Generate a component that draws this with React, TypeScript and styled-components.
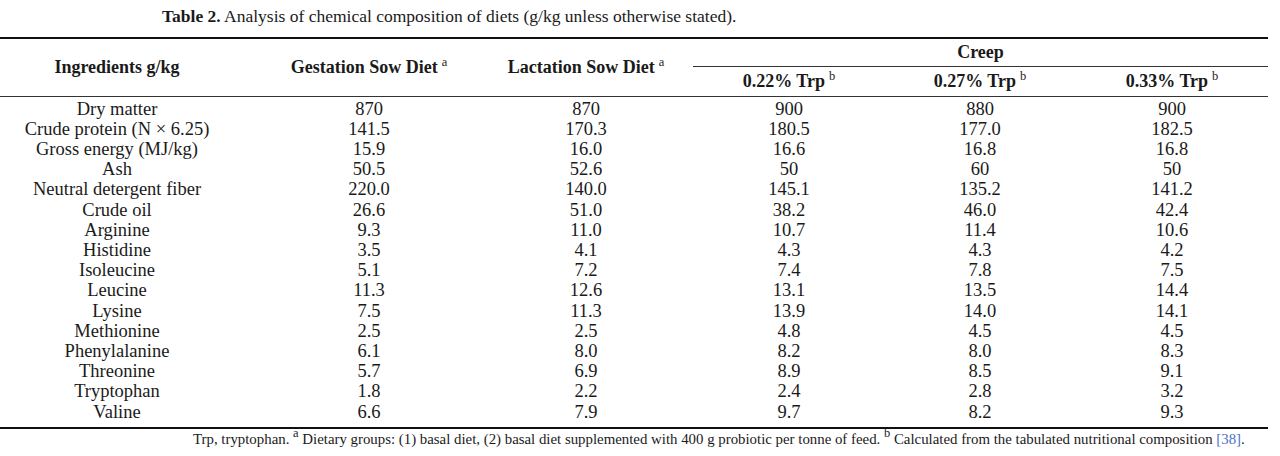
import React from "react";
import styled, { createGlobalStyle } from "styled-components";

const GlobalStyle = createGlobalStyle`
  html, body {
    margin: 0;
    padding: 0;
    background: #ffffff;
  }
  body {
    font-family: "Liberation Serif", "Times New Roman", serif;
    color: #1a1a1a;
  }
`;

const Page = styled.div`
  width: 1268px;
`;

const Caption = styled.div`
  height: 37px;
  padding-left: 162px;
  font-size: 17.5px;
  line-height: 33px;
  white-space: nowrap;

  b {
    font-weight: 700;
  }
`;

const Table = styled.table`
  width: 1268px;
  border-collapse: collapse;
  table-layout: fixed;
  border-top: 2px solid #111;
  border-bottom: 2px solid #111;
`;

const Head = styled.thead`
  border-bottom: 1px solid #333;
`;

const HeadCell = styled.th<{ $pad?: number }>`
  padding: 0 0 0 ${(p) => p.$pad ?? 0}px;
  font-size: 18px;
  font-weight: 700;
  text-align: center;
  vertical-align: middle;
  white-space: nowrap;
`;

const SubHeadRow = styled.tr`
  height: 29px;
`;

const CreepLabel = styled.div`
  height: 27px;
  line-height: 27px;
  border-bottom: 1px solid #333;
`;

const Sup = styled.sup<{ $gap?: number }>`
  font-size: 12.5px;
  font-weight: 400;
  line-height: 0;
  vertical-align: 7px;
  margin-left: ${(p) => p.$gap ?? 4}px;
`;

const Row = styled.tr<{ $first?: boolean; $last?: boolean }>`
  td {
    padding-top: ${(p) => (p.$first ? 2 : 0)}px;
    padding-bottom: ${(p) => (p.$last ? 5 : 0)}px;
  }
`;

const Cell = styled.td<{ $pad?: number }>`
  padding-left: ${(p) => p.$pad ?? 0}px;
  padding-right: 0;
  font-size: 18.5px;
  line-height: 20.2px;
  text-align: center;
  white-space: nowrap;
`;

const Footnote = styled.div`
  padding-left: 193px;
  font-size: 14.85px;
  line-height: 20px;
  white-space: nowrap;
`;

const Ref = styled.span`
  color: #4a72c4;
`;

const widths = [234, 270, 164, 242, 140, 218];

const rows: string[][] = [
  ["Dry matter", "870", "870", "900", "880", "900"],
  ["Crude protein (N × 6.25)", "141.5", "170.3", "180.5", "177.0", "182.5"],
  ["Gross energy (MJ/kg)", "15.9", "16.0", "16.6", "16.8", "16.8"],
  ["Ash", "50.5", "52.6", "50", "60", "50"],
  ["Neutral detergent fiber", "220.0", "140.0", "145.1", "135.2", "141.2"],
  ["Crude oil", "26.6", "51.0", "38.2", "46.0", "42.4"],
  ["Arginine", "9.3", "11.0", "10.7", "11.4", "10.6"],
  ["Histidine", "3.5", "4.1", "4.3", "4.3", "4.2"],
  ["Isoleucine", "5.1", "7.2", "7.4", "7.8", "7.5"],
  ["Leucine", "11.3", "12.6", "13.1", "13.5", "14.4"],
  ["Lysine", "7.5", "11.3", "13.9", "14.0", "14.1"],
  ["Methionine", "2.5", "2.5", "4.8", "4.5", "4.5"],
  ["Phenylalanine", "6.1", "8.0", "8.2", "8.0", "8.3"],
  ["Threonine", "5.7", "6.9", "8.9", "8.5", "9.1"],
  ["Tryptophan", "1.8", "2.2", "2.4", "2.8", "3.2"],
  ["Valine", "6.6", "7.9", "9.7", "8.2", "9.3"],
];

const App: React.FC = () => {
  return (
    <Page>
      <GlobalStyle />
      <Caption>
        <b>Table 2.</b> Analysis of chemical composition of diets (g/kg unless
        otherwise stated).
      </Caption>

      <Table>
        <colgroup>
          {widths.map((w, i) => (
            <col key={i} style={{ width: w }} />
          ))}
        </colgroup>
        <Head>
          <tr>
            <HeadCell rowSpan={2}>Ingredients g/kg</HeadCell>
            <HeadCell rowSpan={2}>
              Gestation Sow Diet<Sup>a</Sup>
            </HeadCell>
            <HeadCell rowSpan={2}>
              Lactation Sow Diet<Sup>a</Sup>
            </HeadCell>
            <HeadCell colSpan={3} $pad={25}>
              <CreepLabel>Creep</CreepLabel>
            </HeadCell>
          </tr>
          <SubHeadRow>
            <HeadCell>
              0.22% Trp<Sup>b</Sup>
            </HeadCell>
            <HeadCell>
              0.27% Trp<Sup>b</Sup>
            </HeadCell>
            <HeadCell $pad={26}>
              0.33% Trp<Sup>b</Sup>
            </HeadCell>
          </SubHeadRow>
        </Head>
        <tbody>
          {rows.map((r, i) => (
            <Row key={r[0]} $first={i === 0} $last={i === rows.length - 1}>
              {r.map((v, j) => (
                <Cell key={j} $pad={j === 5 ? 26 : 0}>
                  {v}
                </Cell>
              ))}
            </Row>
          ))}
        </tbody>
      </Table>

      <Footnote>
        Trp, tryptophan. <Sup $gap={0}>a</Sup> Dietary groups: (1) basal diet,
        (2) basal diet supplemented with 400 g probiotic per tonne of feed.{" "}
        <Sup $gap={0}>b</Sup> Calculated from the tabulated nutritional
        composition <Ref>[38]</Ref>.
      </Footnote>
    </Page>
  );
};

export default App;
